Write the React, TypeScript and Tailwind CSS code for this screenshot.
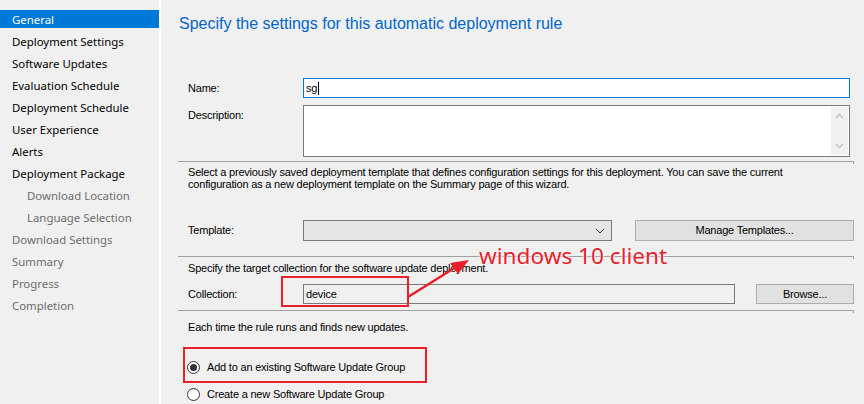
import React from "react";

const navItems: { label: string; sub?: boolean; dim?: boolean; active?: boolean }[] = [
  { label: "General", active: true },
  { label: "Deployment Settings" },
  { label: "Software Updates" },
  { label: "Evaluation Schedule" },
  { label: "Deployment Schedule" },
  { label: "User Experience" },
  { label: "Alerts" },
  { label: "Deployment Package" },
  { label: "Download Location", sub: true, dim: true },
  { label: "Language Selection", sub: true, dim: true },
  { label: "Download Settings", dim: true },
  { label: "Summary", dim: true },
  { label: "Progress", dim: true },
  { label: "Completion", dim: true },
];

function Divider() {
  return (
    <div className="ml-[17px] w-[676px] h-[3px] flex items-start">
      <div className="flex-1 h-px bg-[#a0a0a0]" />
      <div className="w-px h-[3px] bg-[#a0a0a0]" />
    </div>
  );
}

function Radio({ checked, label }: { checked?: boolean; label: string }) {
  return (
    <div className="h-[20px] pl-[26px] flex items-center">
      <div className="w-[13px] h-[13px] rounded-full border border-[#333] bg-white flex items-center justify-center">
        {checked && <div className="w-[7px] h-[7px] rounded-full bg-[#333]" />}
      </div>
      <span className="ml-[7px] text-black">{label}</span>
    </div>
  );
}

export default function App() {
  return (
    <div className="relative w-[864px] h-[404px] overflow-hidden flex bg-[#f0f0f0] font-['Liberation_Sans',Arial,sans-serif]">
      {/* Sidebar */}
      <aside className="w-[161px] shrink-0 bg-[#f0f0f0] border-r-2 border-white pt-[8px] font-['Noto_Sans',sans-serif] text-[11.4px]">
        {navItems.map((it) => (
          <div key={it.label} className="h-[22px] py-[2px]">
            <div
              className={
                "h-[18px] flex items-center leading-none pt-[2px] " +
                (it.active ? "bg-[#0078d7] text-white " : it.dim ? "text-[#6d6d6d] " : "text-black ") +
                (it.sub ? "pl-[27px]" : "pl-[12px]")
              }
            >
              {it.label}
            </div>
          </div>
        ))}
      </aside>

      {/* Main */}
      <main className="flex-1 min-w-0 text-[11px] tracking-[-0.2px] text-black">
        <div className="h-[48px] flex items-center pl-[18px] text-[16px] tracking-normal text-[#0066cc]">
          Specify the settings for this automatic deployment rule
        </div>

        {/* Name */}
        <div className="mt-[30px] h-[20px] flex items-center pl-[27px]">
          <span className="w-[115px]">Name:</span>
          <div className="w-[547px] h-[20px] bg-white border border-[#0078d7] flex items-center pl-[2px]">
            sg<span className="w-px h-[13px] bg-black ml-px" />
          </div>
        </div>

        {/* Description */}
        <div className="mt-[7px] h-[52px] flex items-start pl-[27px]">
          <span className="w-[115px] pt-[2px]">Description:</span>
          <div className="w-[547px] h-[52px] bg-white border border-[#7a7a7a] flex justify-end p-px">
            <div className="w-[17px] h-full bg-[#f0f0f0] flex flex-col items-center justify-between py-[6px]">
              <svg width="9" height="6" viewBox="0 0 9 6">
                <path d="M1 5 L4.5 1.5 L8 5" fill="none" stroke="#c2c2c2" strokeWidth="1.5" />
              </svg>
              <svg width="9" height="6" viewBox="0 0 9 6">
                <path d="M1 1 L4.5 4.5 L8 1" fill="none" stroke="#c2c2c2" strokeWidth="1.5" />
              </svg>
            </div>
          </div>
        </div>

        <div className="mt-[4px]">
          <Divider />
        </div>

        <div className="mt-[2px] pl-[27px] leading-[12px]">
          <div>Select a previously saved deployment template that defines configuration settings for this deployment. You can save the current</div>
          <div>configuration as a new deployment template on the Summary page of this wizard.</div>
        </div>

        {/* Template */}
        <div className="mt-[30px] h-[21px] flex items-center pl-[27px]">
          <span className="w-[115px]">Template:</span>
          <div className="w-[309px] h-[21px] bg-[#e5e5e5] border border-[#7a7a7a] flex items-center justify-end pr-[6px]">
            <svg width="10" height="6" viewBox="0 0 10 6">
              <path d="M1 1 L5 5 L9 1" fill="none" stroke="#333" strokeWidth="1" />
            </svg>
          </div>
          <div className="ml-[23px] w-[219px] h-[21px] bg-[#e1e1e1] border border-[#adadad] flex items-center justify-center">
            Manage Templates...
          </div>
        </div>

        <div className="mt-[15px]">
          <Divider />
        </div>

        <div className="mt-[3px] pl-[27px] leading-[12px]">
          Specify the target collection for the software update deployment.
        </div>

        {/* Collection */}
        <div className="mt-[10px] h-[20px] flex items-center pl-[27px]">
          <span className="w-[115px]">Collection:</span>
          <div className="w-[432px] h-[20px] bg-[#f0f0f0] border border-[#7a7a7a] flex items-center pl-[2px]">
            device
          </div>
          <div className="ml-[21px] w-[98px] h-[20px] bg-[#e1e1e1] border border-[#adadad] flex items-center justify-center">
            Browse...
          </div>
        </div>

        <div className="mt-[6px]">
          <Divider />
        </div>

        <div className="mt-[8px] pl-[27px] leading-[12px]">Each time the rule runs and finds new updates.</div>

        <div className="mt-[24px]">
          <Radio checked label="Add to an existing Software Update Group" />
        </div>
        <div className="mt-[7px]">
          <Radio label="Create a new Software Update Group" />
        </div>
      </main>

      {/* Annotations */}
      <div className="absolute left-[281px] top-[276px] w-[128px] h-[31px] border-2 border-[#e8202a]" />
      <div className="absolute left-[183px] top-[347px] w-[244px] h-[36px] border-2 border-[#e8202a]" />
      <svg className="absolute left-0 top-0 pointer-events-none" width="864" height="404">
        <line x1="408" y1="297" x2="456" y2="267" stroke="#e8202a" strokeWidth="2.5" />
        <polygon points="469,260 450,263 458,274" fill="#e8202a" />
      </svg>
      <div className="absolute left-[479px] top-[242px] text-[22.6px] leading-[28px] text-[#e8202a] font-['Noto_Sans',sans-serif] [text-shadow:0_0_2px_#fff,0_0_2px_#fff,0_0_2px_#fff]">
        windows 10 client
      </div>
    </div>
  );
}
